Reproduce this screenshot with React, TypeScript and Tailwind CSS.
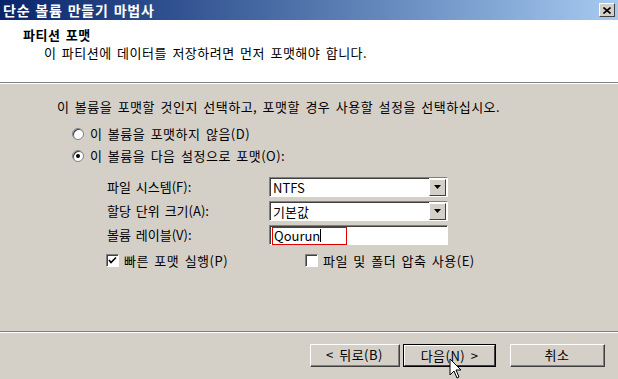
const font = { fontFamily: '"Noto Sans CJK KR", "DejaVu Sans", sans-serif' };

function Radio({ checked }: { checked?: boolean }) {
  return (
    <span className="relative inline-block w-[12px] h-[12px] rounded-full bg-white border border-[#808080] shadow-[inset_1px_1px_0_#404040]">
      {checked && <span className="absolute left-[3px] top-[3px] w-[4px] h-[4px] rounded-full bg-black" />}
    </span>
  );
}

function Check({ checked }: { checked?: boolean }) {
  return (
    <span className="inline-flex items-center justify-center w-[13px] h-[13px] bg-white border-t border-l border-[#808080] border-r border-b border-r-white border-b-white shadow-[inset_1px_1px_0_#404040]">
      {checked && (
        <svg width="9" height="9" viewBox="0 0 9 9">
          <path d="M1 4 L3 6.5 L8 1.5" stroke="#000" strokeWidth="1.6" fill="none" />
        </svg>
      )}
    </span>
  );
}

function Field({ children, combo }: { children: React.ReactNode; combo?: boolean }) {
  return (
    <div className="w-[179px] h-[20px] bg-white border-t border-l border-[#808080] border-r border-b border-r-white border-b-white flex items-center">
      <div className="flex-1 h-full border-t border-l border-[#404040] flex items-center pl-[2px] text-[13px] text-black">{children}</div>
      {combo && (
        <div className="w-[17px] h-[17px] mr-[1px] bg-[#d4d0c8] border border-t-white border-l-white border-r-[#404040] border-b-[#404040] flex items-center justify-center">
          <svg width="7" height="4" viewBox="0 0 7 4"><path d="M0 0 H7 L3.5 4 Z" fill="#000" /></svg>
        </div>
      )}
    </div>
  );
}

function Btn({ children, focus, w }: { children: React.ReactNode; focus?: boolean; w: string }) {
  return (
    <div className={`${w} h-[23px] flex items-center justify-center text-black bg-[#d4d0c8] border ${focus ? 'border-black' : 'border-t-white border-l-white border-r-[#404040] border-b-[#404040]'}`}>
      <div className={`w-full h-full flex items-center justify-center ${focus ? 'border border-t-white border-l-white border-r-[#404040] border-b-[#404040]' : 'border-r border-b border-[#808080]'}`}>{children}</div>
    </div>
  );
}

export default function App() {
  return (
    <div style={font} className="relative w-[618px] h-[379px] bg-[#d4d0c8] flex flex-col overflow-hidden text-[13px] tracking-[0.5px] [word-spacing:2px] text-black">
      <div className="h-[20px] bg-gradient-to-r from-[#0a246a] to-[#a6caf0] flex items-center justify-between pl-[3px] pr-[3px]">
        <span className="text-white font-bold text-[14px] tracking-[0.8px] [word-spacing:1px]">단순 볼륨 만들기 마법사</span>
        <div className="w-[16px] h-[14px] bg-[#d4d0c8] border border-t-white border-l-white border-r-[#404040] border-b-[#404040] flex items-center justify-center">
          <svg width="8" height="7" viewBox="0 0 8 7"><path d="M0.5 0.5 L7.5 6.5 M7.5 0.5 L0.5 6.5" stroke="#000" strokeWidth="1.6" /></svg>
        </div>
      </div>
      <div className="h-[62px] bg-white pl-[23px] pt-[6px]">
        <div className="font-bold leading-[18px]">파티션 포맷</div>
        <div className="pl-[21px] leading-[17px]">이 파티션에 데이터를 저장하려면 먼저 포맷해야 합니다.</div>
      </div>
      <div className="border-t border-[#808080] border-b border-b-white" />
      <div className="flex-1 pl-[57px] pt-[14px]">
        <div className="leading-[17px]">이 볼륨을 포맷할 것인지 선택하고, 포맷할 경우 사용할 설정을 선택하십시오.</div>
        <div className="mt-[10px] pl-[15px] flex items-center gap-[6px] h-[17px]"><Radio /><span>이 볼륨을 포맷하지 않음(D)</span></div>
        <div className="mt-[5px] pl-[15px] flex items-center gap-[6px] h-[17px]"><Radio checked /><span>이 볼륨을 다음 설정으로 포맷(O):</span></div>
        <div className="mt-[13px] grid grid-cols-[162px_179px] gap-y-[4px] items-center pl-[50px] tracking-normal">
          <span>파일 시스템(F):</span>
          <Field combo>NTFS</Field>
          <span>할당 단위 크기(A):</span>
          <Field combo>기본값</Field>
          <span>볼륨 레이블(V):</span>
          <Field>
            <span className="inline-flex items-center h-[18px] w-[75px] border border-[#e00000] pl-[1px] -ml-[1px]">Qourun<span className="w-px h-[13px] bg-black" /></span>
          </Field>
        </div>
        <div className="mt-[7px] pl-[49px] flex items-center h-[17px]">
          <div className="w-[199px] flex items-center gap-[5px]"><Check checked /><span>빠른 포맷 실행(P)</span></div>
          <div className="flex items-center gap-[5px]"><Check /><span>파일 및 폴더 압축 사용(E)</span></div>
        </div>
      </div>
      <div className="border-t border-[#808080] border-b border-b-white" />
      <div className="h-[46px] flex items-start pt-[11px] pl-[310px] gap-[3px]">
        <Btn w="w-[90px]">&lt; 뒤로(B)</Btn>
        <Btn w="w-[93px]" focus>다음(N) &gt;</Btn>
        <div className="ml-[11px]"><Btn w="w-[95px]">취소</Btn></div>
      </div>
      <svg className="absolute left-[449px] top-[358px]" width="14" height="21" viewBox="0 0 14 21">
        <path d="M1 1 V17 L5 13 L8 20 L10 19 L7 12 H12 Z" fill="#fff" stroke="#000" strokeWidth="1" />
      </svg>
    </div>
  );
}
